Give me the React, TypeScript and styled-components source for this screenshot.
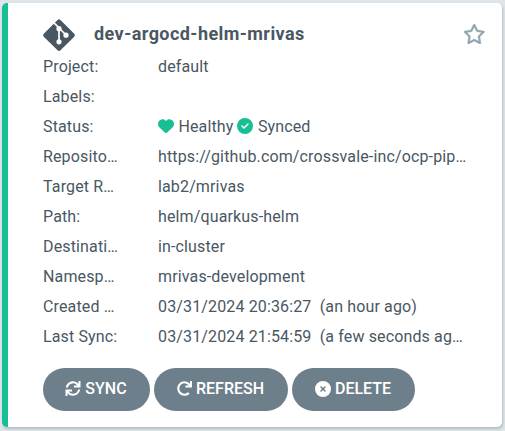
import React from "react";
import styled, { createGlobalStyle } from "styled-components";
import { FaCircleCheck, FaCircleXmark, FaHeart, FaRegStar } from "react-icons/fa6";
import { FaRedo, FaSync } from "react-icons/fa";

const GlobalStyle = createGlobalStyle`
  * { box-sizing: border-box; }
  body {
    margin: 0;
    background: #dee6eb;
    font-family: Roboto, "Liberation Sans", sans-serif;
    font-size: 16px;
    color: #495763;
    overflow: hidden;
  }
`;

const Page = styled.main`
  height: 431px;
  padding: 3px 3px 4px 2px;
`;

const Card = styled.article`
  height: 424px;
  padding: 15px 17px 16px 35px;
  background: #fff;
  border-left: 6px solid #18be94;
  border-radius: 5px;
  box-shadow: 1px 2px 3px rgba(109, 127, 139, 0.4);
`;

const Header = styled.header`
  display: flex;
  align-items: center;
  height: 34px;
`;

const GitSvg = styled.svg`
  width: 32px;
  height: 32px;
  flex: none;
`;

const Title = styled.h1`
  flex: 1;
  margin: 0 0 3px 19px;
  font-size: 18px;
  font-weight: 700;
  line-height: 24px;
  letter-spacing: 0.44px;
`;

const Star = styled(FaRegStar)`
  width: 22.5px;
  height: 20px;
  margin: 0 0 2px;
  stroke: currentColor;
  stroke-width: 8px;
  color: #8fa4b1;
`;

const Details = styled.dl`
  margin: 0;
  letter-spacing: 0.14px;
`;

const Row = styled.div`
  display: grid;
  grid-template-columns: 75px 308.8px;
  column-gap: 40px;
  height: 30px;
  line-height: 30px;
`;

const Label = styled.dt`
  overflow: hidden;
  text-overflow: ellipsis;
  white-space: nowrap;
`;

const Value = styled.dd`
  margin: 0;
  overflow: hidden;
  text-overflow: ellipsis;
  white-space: pre;
`;

const Status = styled.span`
  margin-right: 4px;

  svg {
    margin-right: 4.4px;
    color: #18be94;
    vertical-align: -2px;
  }
`;

const Actions = styled.footer`
  display: flex;
  gap: 4px;
  margin-top: 16px;
`;

const Button = styled.button<{ $width: number }>`
  display: flex;
  align-items: center;
  justify-content: center;
  gap: 4px;
  width: ${({ $width }) => $width}px;
  height: 43px;
  padding: 0 1px 2px 0;
  border: 0;
  border-radius: 22px;
  background: #6d7f8b;
  color: #fff;
  font: 500 16px Roboto, sans-serif;
`;

const SyncIcon = styled(FaSync)`
  width: 16px;
  height: 15px;
`;

const RefreshIcon = styled(FaRedo)`
  width: 15px;
  height: 15px;
`;

const GitIcon = () => (
  <GitSvg viewBox="0 0 32 32">
    <path d="M14.3 1.2a2.4 2.4 0 0 1 3.4 0L31 14.5a2.4 2.4 0 0 1 0 3.4L17.7 31.1a2.4 2.4 0 0 1-3.4 0L1 17.9a2.4 2.4 0 0 1 0-3.4Z" fill="#495763" />
    <g stroke="#fff" fill="none" strokeWidth="1.7">
      <path d="M10.8 3.7L23 16M16 9.7V23" />
    </g>
    <g fill="#fff">
      <circle cx="16" cy="9.7" r="2.6" />
      <circle cx="23" cy="16.2" r="2.6" />
      <circle cx="16" cy="22.8" r="2.6" />
    </g>
  </GitSvg>
);

const details: [string, React.ReactNode][] = [
  ["Project:", "default"],
  ["Labels:", ""],
  ["Status:", <><Status><FaHeart />Healthy</Status><Status><FaCircleCheck />Synced</Status></>],
  ["Repository:", "https://github.com/crossvale-inc/ocp-pipelines"],
  ["Target Revision:", "lab2/mrivas"],
  ["Path:", "helm/quarkus-helm"],
  ["Destination:", "in-cluster"],
  ["Namespace:", "mrivas-development"],
  ["Created At:", "03/31/2024 20:36:27  (an hour ago)"],
  ["Last Sync:", "03/31/2024 21:54:59  (a few seconds ago)"],
];

export default function App() {
  return (
    <Page>
      <GlobalStyle />
      <Card>
        <Header>
          <GitIcon />
          <Title>dev-argocd-helm-mrivas</Title>
          <Star />
        </Header>
        <Details>
          {details.map(([label, value]) => (
            <Row key={label}>
              <Label>{label}</Label>
              <Value>{value}</Value>
            </Row>
          ))}
        </Details>
        <Actions>
          <Button $width={107}><SyncIcon />SYNC</Button>
          <Button $width={134}><RefreshIcon />REFRESH</Button>
          <Button $width={123}><FaCircleXmark />DELETE</Button>
        </Actions>
      </Card>
    </Page>
  );
}
